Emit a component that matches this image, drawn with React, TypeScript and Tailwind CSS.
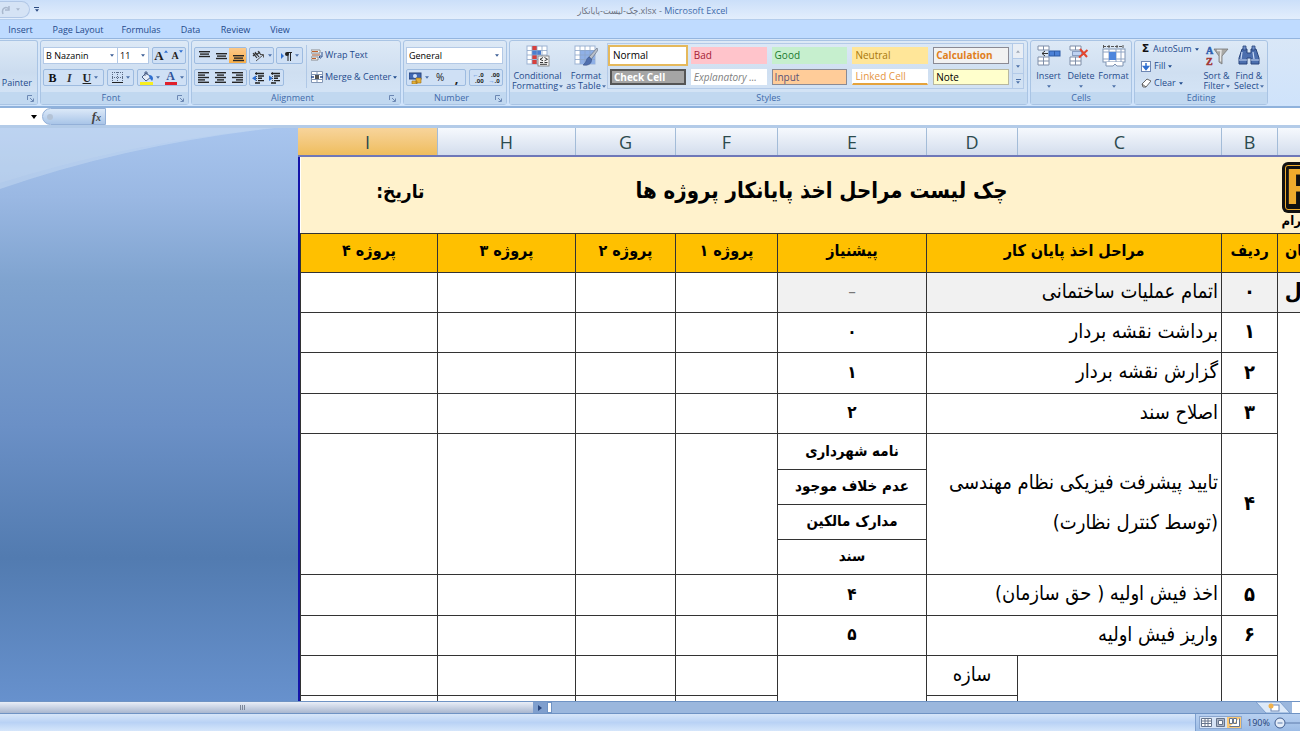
import type { ReactNode } from "react";
import clsx from "clsx";

const INK = "#1f3f77";

function Caret({ className, big }: { className?: string; big?: boolean }) {
  return (
    <svg viewBox="0 0 6 4" className={clsx("shrink-0", big ? "h-[4px] w-[6px]" : "h-[3px] w-[4px]", className)} aria-hidden="true">
      <path d="M0 0h6L3 4z" fill="currentColor" />
    </svg>
  );
}

function Launcher() {
  return (
    <button aria-label="More options" className="h-[7px] w-[7px] text-[#6b87b3]">
      <svg viewBox="0 0 7 7" className="h-[7px] w-[7px]">
        <path d="M.5 5V.5H5M3 3l3 3M6.5 3.5v3h-3" fill="none" stroke="currentColor" />
      </svg>
    </button>
  );
}

function Group({ title, width, launcher, children }: { title: string; width: string; launcher?: boolean; children: ReactNode }) {
  return (
    <section className={clsx("flex h-[65px] shrink-0 flex-col rounded-[3px] border border-[#a9c4e4] bg-linear-to-b from-[#dde9f6] via-[#cfdff1] to-[#d6e6f8]", width)}>
      <div className="flex min-h-0 flex-1 overflow-hidden">{children}</div>
      <div className="flex h-[12px] items-center bg-[#c1d8f0] px-1 text-[9px] leading-[12px] text-[#3e6aaa]">
        <h2 className="flex-1 text-center">{title}</h2>
        {launcher && <Launcher />}
      </div>
    </section>
  );
}

function Strip({ children, className }: { children: ReactNode; className?: string }) {
  return (
    <div className={clsx("flex h-[17px] shrink-0 items-stretch rounded-[2px] border border-[#9dbbe0] bg-[#cfe0f5]", className)}>
      {children}
    </div>
  );
}

function Tool({ label, children, className, menu }: { label: string; children: ReactNode; className?: string; menu?: boolean }) {
  return (
    <button aria-label={label} className={clsx("flex flex-1 items-center justify-center gap-[3px] text-[#4c70a8]", className)}>
      {children}
      {menu && <Caret />}
    </button>
  );
}

// stacked text lines, each entry is [x, width]
function Lines({ rows, top = 1 }: { rows: [number, number][]; top?: number }) {
  return (
    <svg viewBox="0 0 12 12" className="h-[12px] w-[12px]">
      {rows.map(([x, w], i) => (
        <rect key={i} x={x} y={top + i * 2.4} width={w} height="1.4" fill="#262626" />
      ))}
    </svg>
  );
}

function IndentIcon({ flip }: { flip?: boolean }) {
  return (
    <svg viewBox="0 0 13 12" className="h-[12px] w-[13px]">
      <path d="M3 1.500h9M6 4h6M6 6.300h4M6 8.600h6M3 11h5" stroke="#222" strokeWidth="1.400" />
      <path d={flip ? "M5 6.300 1 3.500v5.600z" : "M0 6.300 4 3.500v5.600z"} fill="#2f6fd0" />
      <path d="M4.500 0v12" stroke="#333" strokeWidth=".8" strokeDasharray="1 1" />
    </svg>
  );
}

function BigButton({ icon, lines, className }: { icon: ReactNode; lines: [string, string]; className?: string }) {
  return (
    <button className={clsx("flex shrink-0 flex-col items-center pt-[4px] text-[9px] leading-[10px] text-[#1f4a8c]", className)}>
      {icon}
      <span className="mt-[4px] whitespace-nowrap">{lines[0]}</span>
      <span className="flex h-[10px] items-center gap-px whitespace-nowrap">
        {lines[1]}
        <Caret className="text-[#4c70a8]" />
      </span>
    </button>
  );
}

function GridIcon({ kind }: { kind: "conditional" | "table" }) {
  return (
    <svg viewBox="0 0 24 22" className="h-[22px] w-[24px]">
      <rect x="1" y="1" width="20" height="18" fill="#fff" stroke="#9db3d3" />
      {kind === "conditional" ? (
        <>
          <path d="M6 1h5v4H6zM6 10h5v4H6zM6 15h5v4H6z" fill="#d8403c" />
          <path d="M6 5h9v5H6z" fill="#4a7ed0" />
        </>
      ) : (
        <path d="M6 5h15v14H6z" fill="#8fb0e6" />
      )}
      <path d="M6 1v18M11 1v18M16 1v18M1 5.500h20M1 10h20M1 14.500h20" stroke="#8ba4c8" strokeWidth=".8" />
      {kind === "conditional" ? (
        <>
          <rect x="12" y="11" width="11" height="10" fill="#f5f5f5" stroke="#777" strokeWidth=".8" />
          <path d="M17 12.500 14 14.300l3 1.500M14 17.500h3M18.500 12.500l3 1.800-3 1.500M18.500 17.500h3M14 19.300h7" fill="none" stroke="#222" strokeWidth=".9" />
        </>
      ) : (
        <>
          <path d="M23 3 15 12l2.500 2L24 5z" fill="#b9c0ca" stroke="#5d6675" strokeWidth=".6" />
          <path d="M15 12c-3 1-2 5-6 8 5 1 9-1 8.500-6z" fill="#4f6fae" stroke="#30497c" strokeWidth=".5" />
        </>
      )}
    </svg>
  );
}

function CellsIcon({ kind }: { kind: "insert" | "delete" | "format" }) {
  if (kind === "format") {
    return (
      <svg viewBox="0 0 24 22" className="h-[22px] w-[24px]">
        <path d="M1 1.500h20M1.500 0v3M7 0v3M15 0v3M21 0v3" stroke="#555" strokeDasharray="3 1" />
        <rect x="1" y="4" width="22" height="13" fill="#fff" stroke="#7f93b2" />
        <path d="M1 7h22M1 14h22M7 4v13M14 4v13M19 4v13" stroke="#8fa4c4" />
        <rect x="7" y="7" width="7" height="8" fill="#4f86dc" />
        <path d="M4 17v4h7l2-2 2 2h6v-4" fill="#fff" stroke="#7f93b2" />
      </svg>
    );
  }
  return (
    <svg viewBox="0 0 24 22" className="h-[22px] w-[24px]">
      <path d="M1 1h11v4H1zM1 12h11v8H1z" fill="#fff" stroke="#7f8ea8" />
      <path d="M6.500 1v4M6.500 12v8M1 16h11" stroke="#7f8ea8" />
      {kind === "insert" ? (
        <>
          <rect x="12" y="6" width="11" height="5" fill="#4a80d6" stroke="#2d5aa5" />
          <path d="M17.500 6v5" stroke="#2d5aa5" />
          <path d="M11 8.500H5M8 6 5 8.500 8 11" fill="none" stroke="#333" />
        </>
      ) : (
        <>
          <path d="M3.500 6.500h9v4h-9z" fill="#bfd3f2" stroke="#44608f" strokeDasharray="1 1" />
          <path d="m11 4 7 8M18.500 5 10 12.500" stroke="#e2462f" strokeWidth="2" />
        </>
      )}
    </svg>
  );
}

function SortIcon() {
  return (
    <svg viewBox="0 0 24 22" className="h-[22px] w-[24px]">
      <text x="1" y="9" fontFamily="Liberation Serif, serif" fontWeight="700" fontSize="10" fill="#2f5fae" stroke="#2f5fae" strokeWidth=".5">A</text>
      <text x="1" y="20" fontFamily="Liberation Serif, serif" fontWeight="700" fontSize="10" fill="#a23434" stroke="#a23434" strokeWidth=".5">Z</text>
      <path d="M9 4h14l-6 7v8l-3-2v-6z" fill="#a9a9a6" stroke="#777" strokeWidth=".8" />
      <path d="M12 5.500h4l-.500 6v5" fill="none" stroke="#e8e8e8" strokeWidth="1.400" />
    </svg>
  );
}

function FindIcon() {
  return (
    <svg viewBox="0 0 24 22" className="h-[22px] w-[24px]">
      <path d="M5 4h5v4h4V4h5l3 9v6h-8v-6h-4v6H2v-6z" fill="#4c6fae" stroke="#28457c" />
      <path d="M6 1h3v4H6zM15 1h3v4h-3z" fill="#6f8fc8" stroke="#28457c" strokeWidth=".8" />
      <path d="M5 7 4 14M16 7l1 7M2 15h8M14 15h8" stroke="#c7d9f5" strokeWidth="1.200" />
    </svg>
  );
}

const TABS = [
  { label: "Insert", width: "w-[41px]" },
  { label: "Page Layout", width: "w-[74px]" },
  { label: "Formulas", width: "w-[52px]" },
  { label: "Data", width: "w-[47px]" },
  { label: "Review", width: "w-[43px]" },
  { label: "View", width: "w-[46px]" },
];

const CELL_STYLES = [
  { label: "Normal", look: "bg-white text-black outline-2 outline-[#e5b95c] border-white" },
  { label: "Bad", look: "bg-[#ffc4cb] text-[#a51c36] border-[#ffc4cb]" },
  { label: "Good", look: "bg-[#c6efce] text-[#1b7a2f] border-[#c6efce]" },
  { label: "Neutral", look: "bg-[#ffe699] text-[#a9770c] border-[#ffe699]" },
  { label: "Calculation", look: "bg-[#f2f2f2] font-bold text-[#e07f1c] border-[#8a8a94]" },
  { label: "Check Cell", look: "bg-[#a5a5a5] font-bold text-white border-2 border-[#555]" },
  { label: "Explanatory ...", look: "bg-white italic text-[#808080] border-white" },
  { label: "Input", look: "bg-[#ffcc99] text-[#5a5276] border-[#8a8a94]" },
  { label: "Linked Cell", look: "bg-white text-[#e5953f] border-white border-b-2 border-b-[#e5a33c]" },
  { label: "Note", look: "bg-[#ffffcc] text-black border-[#b8b8a0]" },
];

function TitleBar() {
  return (
    <header className="flex h-[19px] shrink-0 items-center bg-linear-to-b from-[#cbdff9] to-[#e3eefc]">
      <div className="flex h-[17px] w-[30px] items-center justify-end gap-[5px] rounded-r-full border border-l-0 border-[#b1c7e6] bg-[#d5e3f5] pr-[9px] text-[#a9b8cd]">
        <svg viewBox="0 0 10 10" className="h-[10px] w-[10px]">
          <path d="M2 9C0 3 5 1 8 4M8 1v4H4" fill="none" stroke="currentColor" strokeWidth="1.500" />
        </svg>
        <Caret />
      </div>
      <button aria-label="Customize toolbar" className="ml-[4px] flex flex-col items-center gap-px text-[#2b4a80]">
        <span className="h-px w-[5px] bg-current" />
        <Caret />
      </button>
      <h1 className="mt-[3px] flex-1 pl-[12px] text-center text-[9px] text-[#3e6aaa]">
        <span className="font-['DejaVu_Sans_Condensed','DejaVu_Sans',sans-serif] text-[#6b7280]" dir="rtl">چک-لیست-پایانکار</span>
        <span className="text-[#6b7280]">.xlsx - </span>Microsoft Excel
      </h1>
      <span className="w-[46px]" />
    </header>
  );
}

function FontGroup() {
  return (
    <Group title="Font" width="w-[149px]" launcher>
      <div className="flex flex-col gap-[5px] px-[2px] pt-[6px]">
        <div className="flex gap-[3px]">
          <div className="flex h-[17px] border border-[#b3c9e6] bg-white text-[9px] text-black">
            <label className="flex w-[73px] items-center pr-[3px] pl-[2px] text-[#3d5f96]">
              <select aria-label="Font name" className="min-w-0 flex-1 appearance-none text-black"><option>B Nazanin</option></select>
              <Caret />
            </label>
            <label className="flex w-[31px] items-center border-l border-[#b3c9e6] pr-[3px] pl-[2px] text-[#3d5f96]">
              <select aria-label="Font size" className="min-w-0 flex-1 appearance-none text-black"><option>11</option></select>
              <Caret />
            </label>
          </div>
          <Strip className="w-[34px] font-['Liberation_Serif',serif] font-bold">
            <Tool label="Grow font"><span className="flex items-start text-[13px] leading-[14px] text-[#222]">A<Caret className="mt-px rotate-180 text-[#2f6fd0]" /></span></Tool>
            <Tool label="Shrink font"><span className="flex items-start text-[10px] leading-[12px] text-[#222]">A<Caret className="text-[#2f6fd0]" /></span></Tool>
          </Strip>
        </div>
        <div className="flex gap-[3px] font-['Liberation_Serif',serif] text-[12px]">
          <Strip className="w-[61px]">
            <Tool label="Bold"><b className="text-[#111]">B</b></Tool>
            <Tool label="Italic"><i className="font-bold text-[#333]">I</i></Tool>
            <Tool label="Underline" menu className="flex-[1.5]"><u className="font-bold text-[#222]">U</u></Tool>
          </Strip>
          <Strip className="w-[27px]">
            <Tool label="Borders" menu>
              <svg viewBox="0 0 11 11" className="h-[11px] w-[11px]">
                <path d="M.5 0v10M5.500 0v10M10.500 0v10M0 .5h11M0 5.500h11" stroke="#5b6b85" strokeDasharray="1 1" />
                <path d="M0 10.500h11" stroke="#222" />
              </svg>
            </Tool>
          </Strip>
          <Strip className="w-[50px]">
            <Tool label="Fill color" menu>
              <svg viewBox="0 0 13 14" className="h-[14px] w-[13px]">
                <path d="m6 2 5 4-5 4-4-4z" fill="#e6edf8" stroke="#4a5f86" />
                <path d="M9 4c4 0 5 4 3 6-1-1-3-3-3-6z" fill="#2f6fd0" />
                <path d="M5 5V1h2v3" fill="none" stroke="#4a5f86" />
                <rect x="0" y="11" width="13" height="3" fill="#f7ee1f" />
              </svg>
            </Tool>
            <Tool label="Font color" menu>
              <span className="flex w-[12px] justify-center border-b-3 border-[#e0202b] text-[12px] leading-[11px] font-bold text-[#2f559b]">A</span>
            </Tool>
          </Strip>
        </div>
      </div>
    </Group>
  );
}

function AlignmentGroup() {
  return (
    <Group title="Alignment" width="w-[210px]" launcher>
      <div className="flex w-[114px] shrink-0 flex-col gap-[5px] pt-[6px] pl-[2px]">
        <div className="flex gap-[2px]">
          <Strip className="w-[53px]">
            <Tool label="Top align"><Lines rows={[[1, 11], [2, 9], [1, 11]]} /></Tool>
            <Tool label="Middle align"><Lines top={3} rows={[[1, 11], [2, 9], [1, 11]]} /></Tool>
            <Tool label="Bottom align" className="bg-linear-to-b from-[#fbc98a] to-[#f9b049]"><Lines top={5} rows={[[1, 11], [2, 9], [1, 11]]} /></Tool>
          </Strip>
          <Strip className="w-[25px]">
            <Tool label="Orientation" menu>
              <svg viewBox="0 0 13 12" className="h-[12px] w-[13px]">
                <path d="m1 3 4 5M3 2l4 5M6 1l3 4M1 6l3-3M4 5l4-3" fill="none" stroke="#333" strokeWidth="1.200" />
                <path d="m4 11 7-6M11.500 4.500v3M11.500 4.500h-3" fill="none" stroke="#555" />
              </svg>
            </Tool>
          </Strip>
          <Strip className="w-[27px]">
            <Tool label="Text direction" menu>
              <svg viewBox="0 0 12 10" className="h-[10px] w-[12px]">
                <path d="M1 2v6l3-3z" fill="#2f6fd0" />
                <path d="M8 1v9M10.500 1v9M7 1.500h5" stroke="#222" />
                <circle cx="7" cy="3" r="2" fill="#222" />
              </svg>
            </Tool>
          </Strip>
        </div>
        <div className="flex gap-[2px]">
          <Strip className="w-[53px]">
            <Tool label="Align left"><Lines rows={[[0, 11], [0, 7], [0, 11], [0, 7], [0, 11]]} top={0} /></Tool>
            <Tool label="Center"><Lines rows={[[0, 11], [2, 7], [0, 11], [2, 7], [0, 11]]} top={0} /></Tool>
            <Tool label="Align right"><Lines rows={[[0, 11], [4, 7], [0, 11], [4, 7], [0, 11]]} top={0} /></Tool>
          </Strip>
          <Strip className="w-[35px]">
            <Tool label="Decrease indent"><IndentIcon /></Tool>
            <Tool label="Increase indent"><IndentIcon flip /></Tool>
          </Strip>
        </div>
      </div>
      <div className="my-[4px] flex flex-col gap-[6px] border-l border-[#b0c8e6] pt-[2px] pl-[4px] text-[9px] text-[#1f4a8c]">
        <button className="flex h-[16px] items-center gap-[2px] whitespace-nowrap">
          <svg viewBox="0 0 12 12" className="h-[12px] w-[12px]">
            <path d="M0 1h9v3H0zM0 8h7v3H0z" fill="#fff" stroke="#777" strokeWidth=".8" />
            <path d="M1 2.500h6M1 6h8M1 9.500h4" stroke="#c0622b" />
            <path d="M11 3v5H8M9.500 6.500 8 8l1.500 1.500" fill="none" stroke="#2c4e8c" />
          </svg>
          Wrap Text
        </button>
        <button className="flex h-[16px] items-center gap-[2px] whitespace-nowrap">
          <svg viewBox="0 0 12 12" className="h-[12px] w-[12px]">
            <path d="M.5.5h11v11H.5z" fill="#fff" stroke="#8296b5" />
            <path d="M6 0v3M6 9v3M0 3.500h12M0 8.500h12" stroke="#8296b5" />
            <rect x="4" y="4" width="4" height="4" fill="#555" />
            <path d="M0 6h3M9 6h3" stroke="#2c4e8c" strokeWidth="1.500" />
          </svg>
          Merge &amp; Center
          <Caret />
        </button>
      </div>
    </Group>
  );
}

function NumberGroup() {
  return (
    <Group title="Number" width="w-[104px]" launcher>
      <div className="flex flex-col gap-[5px] px-[2px] pt-[6px]">
        <label className="flex h-[17px] w-[97px] items-center border border-[#b3c9e6] bg-white pr-[3px] pl-[2px] text-[9px] text-[#3d5f96]">
          <select aria-label="Number format" className="min-w-0 flex-1 appearance-none text-black"><option>General</option></select>
          <Caret />
        </label>
        <div className="flex gap-[3px] text-[10px]">
          <Strip className="w-[60px]">
            <Tool label="Accounting format" menu className="flex-[1.5]">
              <svg viewBox="0 0 13 12" className="h-[12px] w-[13px]">
                <rect x="0" y="1" width="12" height="6" fill="#3f68b4" stroke="#28457c" />
                <circle cx="6" cy="4" r="2" fill="#cfe0fa" />
                <path d="M7 6h5v5H7zM3 9h5v3H3z" fill="#e4b13a" stroke="#9a6c12" strokeWidth=".6" />
              </svg>
            </Tool>
            <Tool label="Percent"><span className="text-[#222]">%</span></Tool>
            <Tool label="Comma"><b className="text-[13px] leading-[8px] text-[#222]">,</b></Tool>
          </Strip>
          <Strip className="w-[34px] text-[6px] leading-[6px] font-bold">
            <Tool label="Increase decimal"><span className="text-right text-[#222]"><span className="text-[#2f6fd0]">←</span>.0<br />.00</span></Tool>
            <Tool label="Decrease decimal"><span className="text-right text-[#222]">.00<br /><span className="text-[#2f6fd0]">→</span>.0</span></Tool>
          </Strip>
        </div>
      </div>
    </Group>
  );
}

function StylesGroup() {
  return (
    <Group title="Styles" width="w-[519px]">
      <BigButton className="w-[55px]" icon={<GridIcon kind="conditional" />} lines={["Conditional", "Formatting"]} />
      <BigButton className="w-[42px]" icon={<GridIcon kind="table" />} lines={["Format", "as Table"]} />
      <div className="mt-[2px] flex h-[46px] flex-1 border border-[#b3cae8]">
        <div className="grid flex-1 grid-cols-5 grid-rows-2 gap-x-[5px] gap-y-[5px] p-[3px] pl-[2px]">
          {CELL_STYLES.map((s) => (
            <button key={s.label} className={clsx("flex items-center overflow-hidden border pl-[2px] text-left text-[10px] leading-[12px] whitespace-nowrap", s.look)}>
              {s.label}
            </button>
          ))}
        </div>
        <div className="flex w-[11px] flex-col border-l border-[#b3cae8] text-[#4c70a8]">
          <button aria-label="Scroll up" className="flex flex-1 items-center justify-center bg-[#e9eef5] text-[#a0a8b5]"><Caret className="rotate-180" /></button>
          <button aria-label="Scroll down" className="flex flex-1 items-center justify-center border-y border-[#b3cae8]"><Caret /></button>
          <button aria-label="More styles" className="flex flex-1 flex-col items-center justify-center gap-px"><span className="h-px w-[5px] bg-current" /><Caret /></button>
        </div>
      </div>
      <div className="w-[3px]" />
    </Group>
  );
}

function EditingGroup() {
  return (
    <Group title="Editing" width="w-[134px]">
      <div className="flex w-[65px] shrink-0 flex-col gap-px pl-[6px] text-[9px] text-[#1f4a8c]">
        <button className="flex h-[16px] items-center gap-[3px]">
          <span className="w-[9px] shrink-0 font-['DejaVu_Sans',sans-serif] text-[11px] font-bold text-[#111]">Σ</span>AutoSum<Caret />
        </button>
        <button className="flex h-[16px] items-center gap-[3px]">
          <svg viewBox="0 0 10 11" className="h-[11px] w-[10px]">
            <rect x=".5" y=".5" width="9" height="10" fill="#fff" stroke="#6d86b3" />
            <path d="M5 2v4M2.500 5.500 5 8.500l2.500-3z" fill="#2f6fd0" stroke="#2f6fd0" strokeWidth="1.500" />
          </svg>
          Fill<Caret />
        </button>
        <button className="flex h-[16px] items-center gap-[3px]">
          <svg viewBox="0 0 10 10" className="h-[10px] w-[10px]">
            <path d="m1 6 5-5 4 2-5 6H2z" fill="#fff" stroke="#666" />
            <path d="m1 6 4 3" stroke="#666" />
          </svg>
          Clear<Caret />
        </button>
      </div>
      <BigButton className="w-[33px]" icon={<SortIcon />} lines={["Sort &", "Filter"]} />
      <BigButton className="w-[32px]" icon={<FindIcon />} lines={["Find &", "Select"]} />
    </Group>
  );
}

function Ribbon() {
  return (
    <div className="shrink-0 bg-[#bfdbff]">
      <nav className="flex h-[19px] items-center overflow-hidden border-t border-[#b4cdec] pt-px text-[9px] text-[#1f4a8c]">
        {TABS.map((t) => (
          <button key={t.label} className={clsx("shrink-0 text-center whitespace-nowrap", t.width)}>{t.label}</button>
        ))}
      </nav>
      <div className="flex h-[70px] gap-[2px] overflow-hidden border-t border-b-2 border-t-[#94b5df] border-b-[#8fb2dc] bg-linear-to-b from-[#d9e7f7] to-[#cfe3fb] pt-px">
        <section className="flex h-[65px] w-[38px] shrink-0 flex-col rounded-r-[3px] border border-l-0 border-[#a9c4e4] bg-linear-to-b from-[#dde9f6] via-[#cbdcef] to-[#d6e6f8]">
          <button className="flex flex-1 items-end justify-end pr-[5px] pb-[3px] text-[9px] whitespace-nowrap text-[#1f4a8c]">Format Painter</button>
          <div className="flex h-[12px] items-center justify-end bg-[#c1d8f0] pr-[3px]"><Launcher /></div>
        </section>
        <FontGroup />
        <AlignmentGroup />
        <NumberGroup />
        <StylesGroup />
        <Group title="Cells" width="w-[102px]">
          <BigButton className="w-[35px]" icon={<CellsIcon kind="insert" />} lines={["Insert", ""]} />
          <BigButton className="w-[30px]" icon={<CellsIcon kind="delete" />} lines={["Delete", ""]} />
          <BigButton className="w-[35px]" icon={<CellsIcon kind="format" />} lines={["Format", ""]} />
        </Group>
        <EditingGroup />
      </div>
    </div>
  );
}

function FormulaBar() {
  return (
    <div className="flex h-[20px] shrink-0 border-b-3 border-[#b3cbe8] bg-white">
      <button aria-label="Name box" className="flex w-[42px] items-center justify-end pr-[5px] text-black"><Caret big /></button>
      <div className="flex w-[64px] items-center justify-between rounded-l-full border border-[#93b0d8] bg-linear-to-b from-[#dce9f8] to-[#a9c5e8] pr-[4px] pl-[4px]">
        <span className="h-[6px] w-[6px] rounded-full bg-[#b4c3d6]" />
        <button className="font-['Liberation_Serif',serif] text-[13px] leading-[13px] font-bold text-[#444] italic">f<span className="text-[10px]">x</span></button>
      </div>
      <input aria-label="Formula" className="min-w-0 flex-1 bg-white px-1 text-[10px] outline-none" />
    </div>
  );
}

const COLUMNS = [
  { name: "I", width: "w-[140px]" },
  { name: "H", width: "w-[138px]" },
  { name: "G", width: "w-[100px]" },
  { name: "F", width: "w-[102px]" },
  { name: "E", width: "w-[149px]" },
  { name: "D", width: "w-[91px]" },
  { name: "C", width: "w-[204px]" },
  { name: "B", width: "w-[56px]" },
  { name: "A", width: "w-[77px]" },
];

const HEADINGS = [
  { label: "پروژه ۴", span: 1 },
  { label: "پروژه ۳", span: 1 },
  { label: "پروژه ۲", span: 1 },
  { label: "پروژه ۱", span: 1 },
  { label: "پیشنیاز", span: 1 },
  { label: "مراحل اخذ پایان کار", span: 2 },
  { label: "ردیف", span: 1 },
];

type Step = { no: string; title: string; note?: string; needs: string[]; shade?: boolean; height: string };

const STEPS: Step[] = [
  { no: "۰", title: "اتمام عملیات ساختمانی", needs: ["–"], shade: true, height: "h-[40px]" },
  { no: "۱", title: "برداشت نقشه بردار", needs: ["۰"], height: "h-[40px]" },
  { no: "۲", title: "گزارش نقشه بردار", needs: ["۱"], height: "h-[41px]" },
  { no: "۳", title: "اصلاح سند", needs: ["۲"], height: "h-[40px]" },
  {
    no: "۴",
    title: "تایید پیشرفت فیزیکی نظام مهندسی",
    note: "(توسط کنترل نظارت)",
    needs: ["نامه شهرداری", "عدم خلاف موجود", "مدارک مالکین", "سند"],
    height: "h-[35px] first:h-[36px]",
  },
  { no: "۵", title: "اخذ فیش اولیه ( حق سازمان)", needs: ["۴"], height: "h-[41px]" },
  { no: "۶", title: "واریز فیش اولیه", needs: ["۵"], height: "h-[40px]" },
];

const LINE = "border border-[#333]";

function StepRows({ step, first }: { step: Step; first: boolean }) {
  const span = step.needs.length;
  const shade = step.shade ? "bg-[#f1f1f1]" : "bg-white";
  return (
    <tbody dir="rtl">
      {step.needs.map((need, i) => (
        <tr key={need} className={step.height}>
          {i === 0 && [4, 3, 2, 1].map((p) => <td key={p} rowSpan={span} className={LINE} />)}
          <td className={clsx(LINE, shade, "text-center", step.shade ? "text-[#777]" : "font-bold", span > 1 ? "text-[15px]" : "text-[17px]")}>{need}</td>
          {i === 0 && (
            <>
              <td colSpan={2} rowSpan={span} className={clsx(LINE, shade, "pr-[3px] pb-[3px] text-right text-[20px] whitespace-nowrap", step.note ? "leading-[40px]" : "leading-[30px]")}>
                {step.title}
                {step.note && <div>{step.note}</div>}
              </td>
              <td rowSpan={span} className={clsx(LINE, shade, "pb-[2px] text-center text-[20px] leading-[30px] font-bold")}>{step.no}</td>
            </>
          )}
          {first && <td className={clsx(LINE, shade, "pr-[33px] text-right text-[22px] leading-[30px] font-bold")}>اول</td>}
          {!first && i === 0 && <td rowSpan={span} className="border-l border-[#333]" />}
        </tr>
      ))}
    </tbody>
  );
}

function Sheet() {
  return (
    <main className="flex min-h-0 flex-1 overflow-hidden">
      <div className="w-[298px] shrink-0 bg-[linear-gradient(#a8c5ee,#9ab8e3_12%,#7fa3cf_27%,#6b90c6_52%,#527bb0_75%,#6791cd)]">
        <svg viewBox="0 0 298 80" className="h-[80px] w-full" preserveAspectRatio="none" aria-hidden="true">
          <path d="M0 0h275Q130 16 0 61z" fill="#e0eefa" opacity=".3" />
          <path d="M0 0h275Q130 14 0 55z" fill="#e0eefa" opacity=".1" />
        </svg>
      </div>
      <div className="min-w-0 flex-1 overflow-hidden bg-white">
        <div className="flex h-[29px] border-b-2 border-[#6f78b8] font-['Open_Sans','Noto_Sans',sans-serif] text-[18px] text-[#2c4a4e]">
          {COLUMNS.map((c) => (
            <div key={c.name} className={clsx("flex shrink-0 items-center justify-center border-r border-[#a3bcd8] pt-px", c.width, c.name === "I" ? "bg-linear-to-b from-[#f7d49b] to-[#efbd5c]" : "bg-linear-to-b from-[#f6f9fd] to-[#d3dded]")}>
              {c.name}
            </div>
          ))}
        </div>
        <div className="border-l-2 border-[#1414a8]">
          <table className="w-[1054px] table-fixed border-collapse font-['DejaVu_Sans_Condensed','DejaVu_Sans',sans-serif] text-black">
            <colgroup>
              {COLUMNS.map((c) => <col key={c.name} className={c.name === "I" ? "w-[137px]" : c.width} />)}
            </colgroup>
            <thead>
              <tr className="h-[76px] bg-[#fff2cc]">
                <th className="pr-[13px] pb-[8px] text-right text-[19px]"><span dir="rtl">تاریخ:</span></th>
                <th colSpan={6} className="pr-[16px] pb-[8px] text-center text-[22px]">چک لیست مراحل اخذ پایانکار پروژه ها</th>
                <th />
                <th className="pt-[2px] pl-[4px]">
                  <div className="flex w-[60px] flex-col items-start">
                    <div className="flex h-[51px] w-[60px] items-center overflow-hidden rounded-[6px] bg-[#111] p-[3px]">
                      <span className="flex h-full w-full items-center overflow-hidden rounded-[3px] border border-[#efab2c] font-['Liberation_Sans',sans-serif] text-[50px] leading-[45px] font-bold text-[#efab2c]">F</span>
                    </div>
                    <span className="text-[13px] leading-[16px]">پیرام</span>
                  </div>
                </th>
              </tr>
              <tr className="h-[39px] bg-[#ffc000] text-[16px]">
                {HEADINGS.map((h) => (
                  <th key={h.label} colSpan={h.span} dir="rtl" className={clsx(LINE, "pb-[4px]")}>{h.label}</th>
                ))}
                <th className={clsx(LINE, "pb-[4px] pl-[7px] text-left")}>زمان</th>
              </tr>
            </thead>
            {STEPS.map((s, i) => <StepRows key={s.no} step={s} first={i === 0} />)}
            <tbody>
              <tr className="h-[40px]">
                {[4, 3, 2, 1].map((p) => <td key={p} className={LINE} />)}
                <td rowSpan={2} className={LINE} />
                <td className={clsx(LINE, "pb-[2px] text-center text-[20px] leading-[30px]")}>سازه</td>
                <td rowSpan={2} className={LINE} />
                <td rowSpan={2} className={LINE} />
                <td rowSpan={2} />
              </tr>
              <tr className="h-[40px]">
                {[4, 3, 2, 1, 0].map((p) => <td key={p} className={LINE} />)}
              </tr>
            </tbody>
          </table>
        </div>
      </div>
    </main>
  );
}

function BottomBars() {
  return (
    <footer className="shrink-0">
      <div className="flex h-[13px] items-stretch border-y border-[#6f93c4] bg-[#9bb7dd]">
        <div className="flex w-[533px] items-center justify-center bg-linear-to-b from-[#e9eef7] to-[#a9b7d0] pr-[48px]">
          <span className="flex h-[5px] w-[5px] justify-center border-x border-[#7c8799]"><span className="w-px bg-[#7c8799]" /></span>
        </div>
        <button aria-label="Scroll right" className="flex w-[14px] items-center justify-center bg-[#7f9fce] text-[#28457c]"><Caret big className="-rotate-90" /></button>
        <span className="w-[5px] border border-[#6f93c4] bg-white" />
        <div className="flex-1" />
        <button aria-label="Insert worksheet" className="h-[11px] w-[36px]">
          <svg viewBox="0 0 36 11" className="h-[11px] w-[36px]">
            <path d="M0 0h24l10 11H10z" fill="#dce9f9" stroke="#7ea0cf" />
            <rect x="15" y="3" width="8" height="6" fill="#fff" stroke="#6a86b5" />
            <circle cx="15" cy="4" r="2.500" fill="#f0b04a" />
          </svg>
        </button>
        <div className="w-[8px] bg-white" />
      </div>
      <div className="flex h-[17px] items-center justify-end bg-linear-to-b from-[#d7e6f9] via-[#b9d2f5] to-[#d5e6fb]">
        <div className="flex h-full items-center gap-[5px] border-l border-[#7ea0cf] bg-linear-to-b from-[#b8d0f0] to-[#9cbce6] pl-[3px] text-[9px] text-[#1f3f77]">
          <div className="flex h-[13px] w-[43px] items-stretch border border-[#8aa6cf] bg-[#d6e3f5]">
            <button aria-label="Normal view" className="flex flex-1 items-center justify-center">
              <svg viewBox="0 0 11 9" className="h-[9px] w-[11px]"><path d="M.5.5h10v8H.5zM.5 3h10M.5 5.500h10M4 .5v8M7 .5v8" fill="#fff" stroke="#66748c" /></svg>
            </button>
            <button aria-label="Page layout view" className="flex flex-1 items-center justify-center">
              <svg viewBox="0 0 9 9" className="h-[9px] w-[9px]"><path d="M.5.5h8v8h-8z" fill="#aab4c4" stroke="#66748c" /><path d="M2.500 2.500h4v4h-4z" fill="#fff" stroke="#66748c" /></svg>
            </button>
            <button aria-label="Page break preview" className="flex flex-1 items-center justify-center bg-[#f9c877]">
              <svg viewBox="0 0 11 9" className="h-[9px] w-[11px]"><path d="M.5.5h3v5h-3zM4.500.5h3v5h-3zM.5 8.500h10V.5" fill="#fff" stroke="#66748c" /></svg>
            </button>
          </div>
          <span className="w-[22px]">190%</span>
          <button aria-label="Zoom out" className="flex h-[12px] w-[26px] items-center">
            <svg viewBox="0 0 26 12" className="h-[12px] w-[26px]">
              <circle cx="6" cy="6" r="5" fill="#e3ecf8" stroke={INK} strokeWidth=".8" />
              <path d="M3.500 6h5M11 6h15" stroke="#5f7cab" strokeWidth="1.200" />
            </svg>
          </button>
        </div>
      </div>
    </footer>
  );
}

export default function App() {
  return (
    <div className="flex h-screen flex-col overflow-hidden bg-[#bfdbff] font-['Open_Sans','Noto_Sans',sans-serif]">
      <TitleBar />
      <Ribbon />
      <FormulaBar />
      <Sheet />
      <BottomBars />
    </div>
  );
}
